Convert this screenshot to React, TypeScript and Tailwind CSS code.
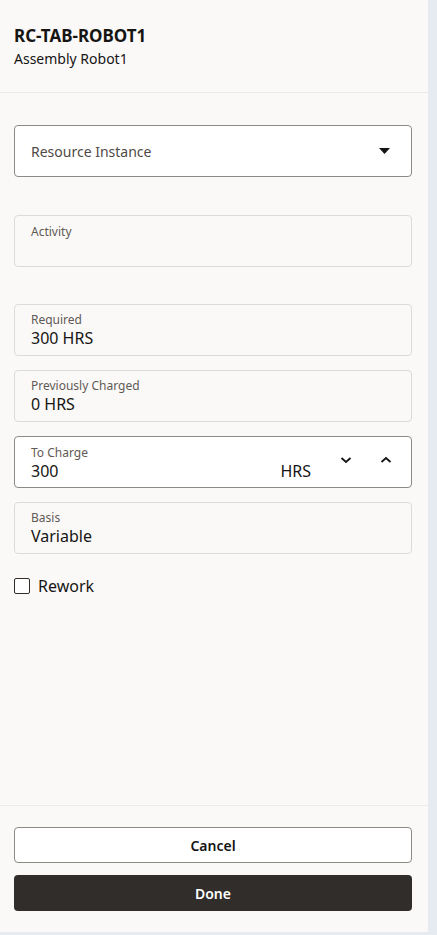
import React from 'react';

function ReadField({ label, value }: { label: string; value?: string }) {
  return (
    <div className="h-[52px] rounded-[4px] border border-[#dedad6] bg-[#fbf9f8] px-4 pt-[7px]">
      <div className="text-[12px] leading-[16px] text-[#5f5a55]">{label}</div>
      {value && <div className="mt-[1px] text-[16px] leading-[18px] text-[#161513]">{value}</div>}
    </div>
  );
}

export default function App() {
  return (
    <div
      className="flex h-[935px] w-[437px] items-start bg-[#e6ebf1]"
      style={{ fontFamily: '"Noto Sans", "Open Sans", sans-serif' }}
    >
      <div className="flex h-[932px] w-[428px] shrink-0 flex-col bg-[#fbf9f8]">
        <div className="h-[93px] border-b border-[#ece9e6] pl-[14px] pr-[16px] pt-[24px]">
          <h1 className="text-[17px] font-bold leading-[24px] text-[#161513]">RC-TAB-ROBOT1</h1>
          <p className="mt-[1px] text-[14px] leading-[19px] text-[#161513]">Assembly Robot1</p>
        </div>

        <div className="flex flex-1 flex-col pl-[14px] pr-[16px] pt-[32px]">
          <div className="flex h-[52px] items-center justify-between rounded-[4px] border border-[#8d8985] bg-white pl-4 pr-[21px]">
            <span className="text-[14px] text-[#4f4a45]">Resource Instance</span>
            <svg width="11" height="6" viewBox="0 0 11 6">
              <path d="M0 0h11L5.5 6z" fill="#161513" />
            </svg>
          </div>

          <div className="mt-[38px]">
            <div className="h-[52px] rounded-[4px] border border-[#dedad6] bg-[#fbf9f8] px-4 pt-[8px]">
              <div className="text-[12px] leading-[16px] text-[#5f5a55]">Activity</div>
            </div>
          </div>

          <div className="mt-[37px] flex flex-col gap-[14px]">
            <ReadField label="Required" value="300 HRS" />
            <ReadField label="Previously Charged" value="0 HRS" />

            <div className="flex h-[52px] items-center rounded-[4px] border border-[#8d8985] bg-white pl-4 pr-[19px]">
              <div className="flex-1">
                <div className="text-[12px] leading-[16px] text-[#5f5a55]">To Charge</div>
                <div className="mt-[1px] flex items-end">
                  <span className="flex-1 text-[16px] leading-[18px] text-[#161513]">300</span>
                  <span className="mr-[29px] text-[16px] leading-[18px] text-[#161513]">HRS</span>
                </div>
              </div>
              <div className="flex items-center gap-[28px] pb-[4px]">
                <svg width="12" height="8" viewBox="0 0 12 8">
                  <path d="M1.5 2l4.5 4 4.5-4" fill="none" stroke="#161513" strokeWidth="1.8" />
                </svg>
                <svg width="12" height="8" viewBox="0 0 12 8">
                  <path d="M1.5 6l4.5-4 4.5 4" fill="none" stroke="#161513" strokeWidth="1.8" />
                </svg>
              </div>
            </div>

            <ReadField label="Basis" value="Variable" />
          </div>

          <label className="mt-[22px] flex items-center gap-[8px]">
            <span className="h-[16px] w-[16px] rounded-[2px] border-[1.5px] border-[#312d2a] bg-white" />
            <span className="text-[16px] leading-[20px] text-[#161513]">Rework</span>
          </label>
        </div>

        <div className="flex flex-col gap-[12px] border-t border-[#ece9e6] pb-[21px] pl-[14px] pr-[16px] pt-[21px]">
          <button className="h-[36px] rounded-[4px] border border-[#8d8985] bg-white text-[14px] font-semibold text-[#161513]">
            Cancel
          </button>
          <button className="h-[36px] rounded-[4px] bg-[#312d2a] text-[14px] font-semibold text-white">
            Done
          </button>
        </div>
      </div>
    </div>
  );
}
